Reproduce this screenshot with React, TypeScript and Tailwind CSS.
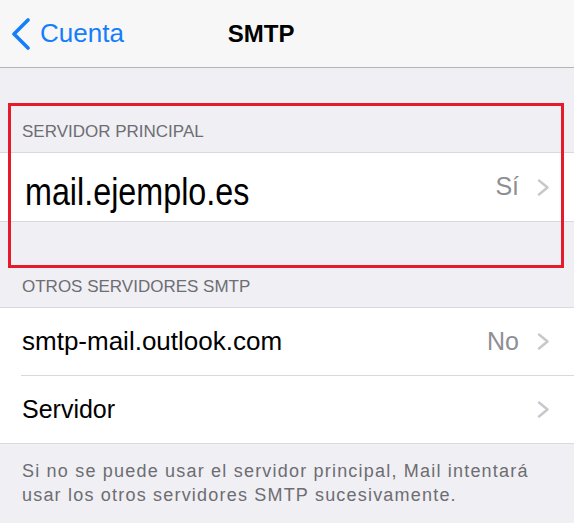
const Chevron = () => (
  <svg width="13" height="17" viewBox="0 0 13 17" className="shrink-0">
    <polyline points="2,1.5 10.5,8.5 2,15.5" fill="none" stroke="#c7c7cc" strokeWidth="2.4" strokeLinecap="round" strokeLinejoin="round" />
  </svg>
);

const SectionHeader = ({ children }: { children: React.ReactNode }) => (
  <div className="flex items-end pl-[22px] pb-[10px] text-[17px] leading-[20px] text-[#6d6d72]">{children}</div>
);

const App = () => {
  return (
    <div className="relative w-[574px] h-[523px] overflow-hidden bg-[#efeff4] font-['Liberation_Sans',Arial,sans-serif]">
      {/* Nav bar */}
      <div className="flex items-center h-[68px] bg-[#f7f7f7] border-b border-[#b4b4b8]">
        <div className="flex items-center pl-[11px]">
          <svg width="20" height="32" viewBox="0 0 20 32" className="shrink-0">
            <polyline points="17,2 3,16 17,30" fill="none" stroke="#157efb" strokeWidth="3.6" strokeLinecap="round" strokeLinejoin="round" />
          </svg>
          <span className="ml-[9px] text-[26px] text-[#157efb]">Cuenta</span>
        </div>
        <span className="ml-[104px] text-[24px] font-bold text-black">SMTP</span>
      </div>

      {/* Servidor principal */}
      <div className="h-[84px] flex flex-col justify-end">
        <SectionHeader>SERVIDOR PRINCIPAL</SectionHeader>
      </div>
      <div className="flex items-center h-[70px] bg-white border-y border-[#d9d9dd] pl-[25px] pr-[24px]">
        <span className="flex-1 pt-[9px] text-[38px] leading-none text-black origin-left scale-x-[0.85] whitespace-nowrap">
          mail.ejemplo.es
        </span>
        <span className="text-[25px] text-[#8e8e93] mr-[18px]">Sí</span>
        <Chevron />
      </div>

      {/* Otros servidores */}
      <div className="h-[85px] flex flex-col justify-end">
        <SectionHeader>OTROS SERVIDORES SMTP</SectionHeader>
      </div>
      <div className="bg-white border-y border-[#d9d9dd]">
        <div className="flex items-center h-[67px] pl-[22px] pr-[24px]">
          <span className="flex-1 text-[26px] text-black">smtp-mail.outlook.com</span>
          <span className="text-[25px] text-[#8e8e93] mr-[18px]">No</span>
          <Chevron />
        </div>
        <div className="ml-[21px] border-t border-[#d9d9dd]" />
        <div className="flex items-center h-[67px] pl-[22px] pr-[24px]">
          <span className="flex-1 text-[25px] text-black">Servidor</span>
          <Chevron />
        </div>
      </div>
      <p className="pt-[15px] pl-[22px] text-[18px] leading-[24px] tracking-[1.2px] text-[#6d6d72] whitespace-nowrap">
        Si no se puede usar el servidor principal, Mail intentará
        <br />
        usar los otros servidores SMTP sucesivamente.
      </p>

      {/* Highlight annotation */}
      <div className="absolute left-[8px] top-[103px] w-[556px] h-[165px] border-[3px] border-[#e51b2b]" />
    </div>
  );
};

export default App;
